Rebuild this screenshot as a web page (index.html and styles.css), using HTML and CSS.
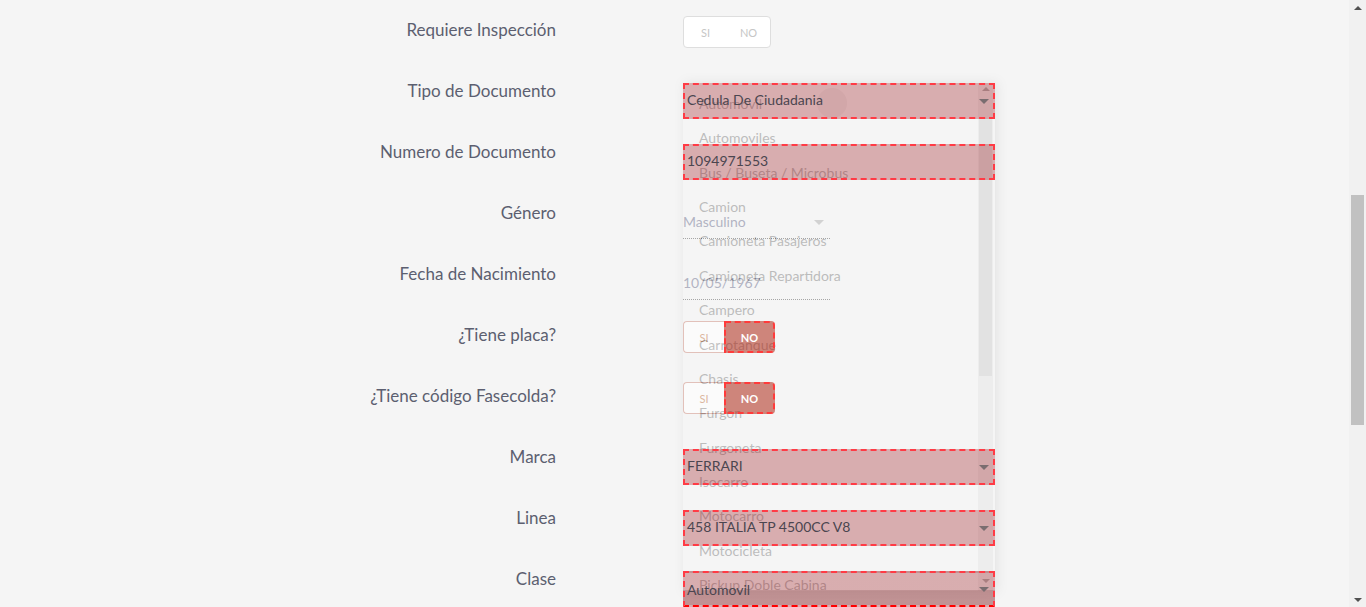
FILE: index.html
```html
<!DOCTYPE html>
<html lang="es">
<head>
<meta charset="utf-8">
<title>Formulario</title>
<link rel="stylesheet" href="styles.css">
</head>
<body>
<div class="viewport">
  <div class="page">
    <form class="form">
      <div class="row">
        <label class="lbl">Requiere Inspección</label>
        <div class="ctl ctl-toggle">
          <div class="toggle toggle-off"><span class="opt">SI</span><span class="opt">NO</span></div>
        </div>
      </div>
      <div class="row">
        <label class="lbl">Tipo de Documento</label>
        <div class="ctl ctl-field hl">
          <div class="field select"><span>Cedula De Ciudadania</span><i class="caret"></i></div>
        </div>
      </div>
      <div class="row">
        <label class="lbl">Numero de Documento</label>
        <div class="ctl ctl-field hl">
          <div class="field"><span>1094971553</span></div>
        </div>
      </div>
      <div class="row">
        <label class="lbl">Género</label>
        <div class="ctl ctl-line">
          <div class="line select"><span>Masculino</span><i class="caret caret-light"></i></div>
        </div>
      </div>
      <div class="row">
        <label class="lbl">Fecha de Nacimiento</label>
        <div class="ctl ctl-line">
          <div class="line"><span>10/05/1967</span></div>
        </div>
      </div>
      <div class="row">
        <label class="lbl">¿Tiene placa?</label>
        <div class="ctl ctl-toggle">
          <div class="toggle toggle-on"><span class="opt">SI</span><span class="opt active">NO</span></div>
        </div>
      </div>
      <div class="row">
        <label class="lbl">¿Tiene código Fasecolda?</label>
        <div class="ctl ctl-toggle">
          <div class="toggle toggle-on"><span class="opt">SI</span><span class="opt active">NO</span></div>
        </div>
      </div>
      <div class="row">
        <label class="lbl">Marca</label>
        <div class="ctl ctl-field hl">
          <div class="field select"><span>FERRARI</span><i class="caret"></i></div>
        </div>
      </div>
      <div class="row">
        <label class="lbl">Linea</label>
        <div class="ctl ctl-field hl">
          <div class="field select"><span>458 ITALIA TP 4500CC V8</span><i class="caret"></i></div>
        </div>
      </div>
      <div class="row">
        <label class="lbl">Clase</label>
        <div class="ctl ctl-field hl">
          <div class="field select field-last"><span>Automovil</span><i class="caret"></i></div>
        </div>
      </div>
    </form>

    <div class="dropdown">
      <ul class="dd-list">
        <li class="dd-first">Automovil<span class="ripple"></span></li>
        <li>Automoviles</li>
        <li>Bus / Buseta / Microbus</li>
        <li>Camion</li>
        <li>Camioneta Pasajeros</li>
        <li>Camioneta Repartidora</li>
        <li>Campero</li>
        <li>Carrotanque</li>
        <li>Chasis</li>
        <li>Furgon</li>
        <li>Furgoneta</li>
        <li>Isocarro</li>
        <li>Motocarro</li>
        <li>Motocicleta</li>
        <li>Pickup Doble Cabina</li>
      </ul>
      <div class="dd-scroll">
        <span class="arr arr-up"></span>
        <span class="dd-thumb"></span>
        <span class="arr arr-down"></span>
      </div>
    </div>
  </div>
  <div class="vscroll">
    <span class="sarr sarr-up"></span>
    <div class="strack"><span class="sthumb"></span></div>
    <span class="sarr sarr-down"></span>
  </div>
</div>
</body>
</html>
```

FILE: styles.css
```css
* { box-sizing: border-box; }
html, body { margin: 0; padding: 0; height: 100%; overflow: hidden; }
body {
  background: #f5f5f5;
  font-family: "Lato", "Open Sans", sans-serif;
  color: #5c5f70;
}
.viewport {
  display: flex;
  height: 607px;
}
.page {
  position: relative;
  flex: 1;
  overflow: hidden;
}
.form {
  display: flex;
  flex-direction: column;
}
.row {
  display: grid;
  grid-template-columns: 556px 312px;
  column-gap: 127px;
  height: 61px;
}
.lbl {
  text-align: right;
  font-size: 17px;
  line-height: 59px;
  color: #5c5f70;
  white-space: nowrap;
}
.ctl { min-width: 0; }
.ctl-toggle { padding-top: 16px; }
.ctl-field { padding-top: 22px; }
.ctl-line { padding-top: 29px; }

.hl { z-index: 3; }

/* toggles */
.toggle {
  display: inline-flex;
  height: 32px;
  border-radius: 4px;
  font-size: 11px;
}
.toggle-off {
  width: 88px;
  background: #fff;
  border: 1px solid #dedede;
}
.toggle-off .opt {
  flex: 1;
  display: flex;
  align-items: center;
  justify-content: center;
  color: #c6c6c6;
}
.toggle-on {
  width: 92px;
}
.toggle-on .opt {
  display: flex;
  align-items: center;
  justify-content: center;
}
.toggle-on .opt:first-child {
  width: 41px;
  background: #fff;
  border: 1px solid #d39a8e;
  border-right: 0;
  border-radius: 4px 0 0 4px;
  color: #c98a60;
}
.toggle-on .opt.active {
  width: 51px;
  background: rgba(170, 30, 12, 0.52);
  border: 2px dashed #ff3b3b;
  border-radius: 0 4px 4px 0;
  color: #fff;
  font-weight: 700;
  position: relative;
  z-index: 3;
}

/* boxed fields (highlighted) */
.field {
  position: relative;
  height: 36px;
  border: 2px dashed #ff3b45;
  background: rgba(150, 8, 14, 0.3);
  font-size: 14px;
  color: #4b4650;
  display: flex;
  align-items: center;
  padding: 0 0 3px 2px;
  white-space: nowrap;
}
.field-last {
  background: linear-gradient(to bottom, rgba(150, 8, 14, 0.3) 0, rgba(150, 8, 14, 0.3) 17px, rgba(120, 10, 14, 0.42) 17px);
  border-bottom-color: #ff0000;
  padding-bottom: 0;
}
.caret {
  position: absolute;
  right: 4px;
  top: 50%;
  margin-top: -2px;
  width: 0; height: 0;
  border-left: 5px solid transparent;
  border-right: 5px solid transparent;
  border-top: 5px solid #7a6d70;
}

/* underlined fields */
.line {
  position: relative;
  width: 147px;
  height: 27px;
  border-bottom: 1px dotted #6b6b6b;
  font-size: 14px;
  color: #80839c;
  display: flex;
  align-items: flex-start;
  padding-top: 1px;
  white-space: nowrap;
}
.caret-light {
  right: 6px;
  top: 8px;
  margin-top: 0;
  border-top-color: #b8b8b8;
}

/* dropdown overlay */
.dropdown {
  position: absolute;
  left: 683px;
  top: 83px;
  width: 312px;
  height: 508px;
  background: #f7f7f7;
  opacity: 0.42;
  box-shadow: 2px 0 10px rgba(0, 0, 0, 0.18);
  z-index: 2;
  display: flex;
  overflow: hidden;
}
.dd-list {
  list-style: none;
  margin: 0;
  padding: 4px 0 0;
  flex: 1;
  font-size: 14px;
  color: #6e6e6e;
}
.dd-list li {
  height: 34.36px;
  line-height: 34.36px;
  padding-left: 16px;
  white-space: nowrap;
}
.dd-first { position: relative; }
.ripple {
  position: absolute;
  left: 134px;
  top: 1px;
  width: 30px;
  height: 30px;
  border-radius: 50%;
  background: rgba(0, 0, 0, 0.09);
}
.dd-scroll {
  width: 15px;
  margin-right: 2px;
  background: #e4e4e4;
  display: flex;
  flex-direction: column;
  align-items: center;
}
.dd-thumb {
  width: 13px;
  margin-top: 28px;
  height: 257px;
  background: #c8c8c8;
}
.arr {
  width: 0; height: 0;
  border-left: 4px solid transparent;
  border-right: 4px solid transparent;
}
.arr-up { border-bottom: 4px solid #555; margin-top: 4px; }
.arr-down { border-top: 4px solid #555; margin-top: auto; margin-bottom: 8px; }

/* page scrollbar */
.vscroll {
  width: 17px;
  background: #f1f1f1;
  display: flex;
  flex-direction: column;
  align-items: center;
}
.sarr {
  width: 0; height: 0;
  border-left: 4px solid transparent;
  border-right: 4px solid transparent;
}
.sarr-up { border-bottom: 4px solid #505050; margin-top: 6px; }
.sarr-down { border-top: 4px solid #505050; margin-bottom: 5px; }
.strack {
  flex: 1;
  width: 100%;
  padding: 0 2px;
}
.sthumb {
  display: block;
  margin-top: 185px;
  height: 230px;
  background: #c1c1c1;
}
```
